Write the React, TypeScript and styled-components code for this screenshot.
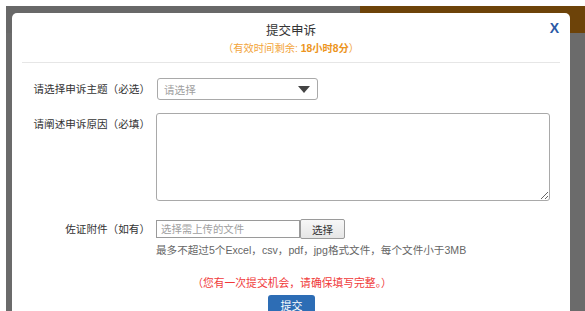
import React from "react";
import styled, { createGlobalStyle } from "styled-components";

const GlobalStyle = createGlobalStyle`
  html, body { margin: 0; padding: 0; background: #ffffff; }
  body { font-family: "Liberation Sans", "Noto Sans CJK SC", sans-serif; }
  * { box-sizing: border-box; }
`;

const Page = styled.div`
  position: relative;
  width: 585px;
  height: 311px;
  overflow: hidden;
  background: #ffffff;
  padding: 6px 0 0 6px;
  display: flex;
`;

const Backdrop = styled.div`
  position: relative;
  flex: 1;
  background: #6b6b6b;
  display: flex;
  flex-direction: column;
`;

const HeaderStrip = styled.div`
  display: flex;
  height: 27px;
`;

const StripGray = styled.div`
  flex: 1;
  background: #686868;
`;

const StripBrown = styled.div`
  width: 225px;
  background: #6d4309;
`;

const Modal = styled.div`
  position: absolute;
  left: 6px;
  top: 7px;
  width: 558px;
  height: 330px;
  background: #ffffff;
  border-radius: 5px;
  display: flex;
  flex-direction: column;
`;

const ModalHeader = styled.div`
  position: relative;
  margin: 0 10px;
  padding: 9px 0 4px;
  border-bottom: 1px solid #e6e6e6;
  text-align: center;
`;

const Title = styled.div`
  font-size: 12.5px;
  line-height: 18px;
  color: #333333;
`;

const Subtitle = styled.div`
  font-size: 10.3px;
  line-height: 18px;
  color: #f2a43a;
`;

const Strong = styled.b`
  color: #ec9420;
`;

const Close = styled.button`
  position: absolute;
  right: 1px;
  top: 7px;
  border: none;
  background: none;
  padding: 0;
  color: #2b5aa6;
  font-size: 14px;
  font-weight: bold;
  line-height: 16px;
  font-family: "Liberation Sans", sans-serif;
  cursor: pointer;
`;

const Form = styled.div`
  display: grid;
  grid-template-columns: 138px 1fr;
  column-gap: 7px;
  padding: 15px 20px 0 0;
  align-items: center;
`;

const Label = styled.div<{ $top?: boolean; $gap: number }>`
  justify-self: end;
  align-self: ${(p) => (p.$top ? "start" : "center")};
  padding-top: ${(p) => (p.$top ? "3px" : "0")};
  margin-top: ${(p) => p.$gap}px;
  font-size: 10.6px;
  line-height: 14px;
  color: #333333;
  white-space: nowrap;
`;

const Field = styled.div<{ $gap: number }>`
  margin-top: ${(p) => p.$gap}px;
  display: flex;
  align-items: center;
`;

const Select = styled.div`
  width: 161px;
  height: 22px;
  border: 1px solid #a9a9a9;
  border-radius: 3px;
  display: flex;
  align-items: center;
  justify-content: space-between;
  padding: 0 7px 0 6px;
  font-size: 10.6px;
  color: #a0a0a0;
`;

const Arrow = styled.span`
  width: 0;
  height: 0;
  border-left: 6px solid transparent;
  border-right: 6px solid transparent;
  border-top: 7px solid #444444;
`;

const TextArea = styled.textarea`
  width: 394px;
  height: 88px;
  margin: -1px 0 0 -1px;
  border: 1px solid #a9a9a9;
  border-radius: 3px;
  resize: both;
  padding: 4px;
  font-family: inherit;
`;

const FileInput = styled.input`
  width: 144px;
  height: 18px;
  border: 1px solid #9a9a9a;
  margin: 0 0 0 -1px;
  padding: 0 4px;
  font-size: 10.4px;
  font-family: inherit;
  color: #333;
  &::placeholder { color: #a0a0a0; }
`;

const PickButton = styled.button`
  width: 45px;
  height: 20px;
  margin: 0;
  border: 1px solid #9a9a9a;
  border-radius: 2px;
  background: linear-gradient(#f7f7f7, #e6e6e6);
  font-size: 10.6px;
  font-family: inherit;
  color: #333;
  padding: 0;
`;

const Hint = styled.div`
  grid-column: 2;
  margin: 4px 0 0 -1px;
  font-size: 10.6px;
  line-height: 14px;
  color: #666666;
  white-space: nowrap;
`;

const Footer = styled.div`
  display: flex;
  flex-direction: column;
  align-items: center;
  padding-top: 19px;
`;

const Notice = styled.div`
  font-size: 10.8px;
  line-height: 14px;
  color: #f03a3a;
  margin-left: 2px;
`;

const Submit = styled.button`
  margin: 5px 0 0 1px;
  width: 47px;
  height: 26px;
  border: none;
  border-radius: 3px;
  background: #2d6db5;
  color: #ffffff;
  font-size: 11px;
  font-family: inherit;
  padding: 4px 0 0;
  line-height: 14px;
  display: flex;
  justify-content: center;
  align-items: flex-start;
`;

export default function App() {
  return (
    <>
      <GlobalStyle />
      <Page>
        <Backdrop>
          <HeaderStrip>
            <StripGray />
            <StripBrown />
          </HeaderStrip>
          <Modal>
            <ModalHeader>
              <Title>提交申诉</Title>
              <Subtitle>
                （有效时间剩余: <Strong>18小时8分</Strong>）
              </Subtitle>
              <Close>X</Close>
            </ModalHeader>
            <Form>
              <Label $gap={0}>请选择申诉主题（必选）</Label>
              <Field $gap={0}>
                <Select>
                  <span>请选择</span>
                  <Arrow />
                </Select>
              </Field>
              <Label $top $gap={14}>请阐述申诉原因（必填）</Label>
              <Field $gap={14}>
                <TextArea />
              </Field>
              <Label $gap={18}>佐证附件（如有）</Label>
              <Field $gap={18}>
                <FileInput placeholder="选择需上传的文件" />
                <PickButton>选择</PickButton>
              </Field>
              <Hint>最多不超过5个Excel，csv，pdf，jpg格式文件，每个文件小于3MB</Hint>
            </Form>
            <Footer>
              <Notice>（您有一次提交机会，请确保填写完整。）</Notice>
              <Submit>提交</Submit>
            </Footer>
          </Modal>
        </Backdrop>
      </Page>
    </>
  );
}
